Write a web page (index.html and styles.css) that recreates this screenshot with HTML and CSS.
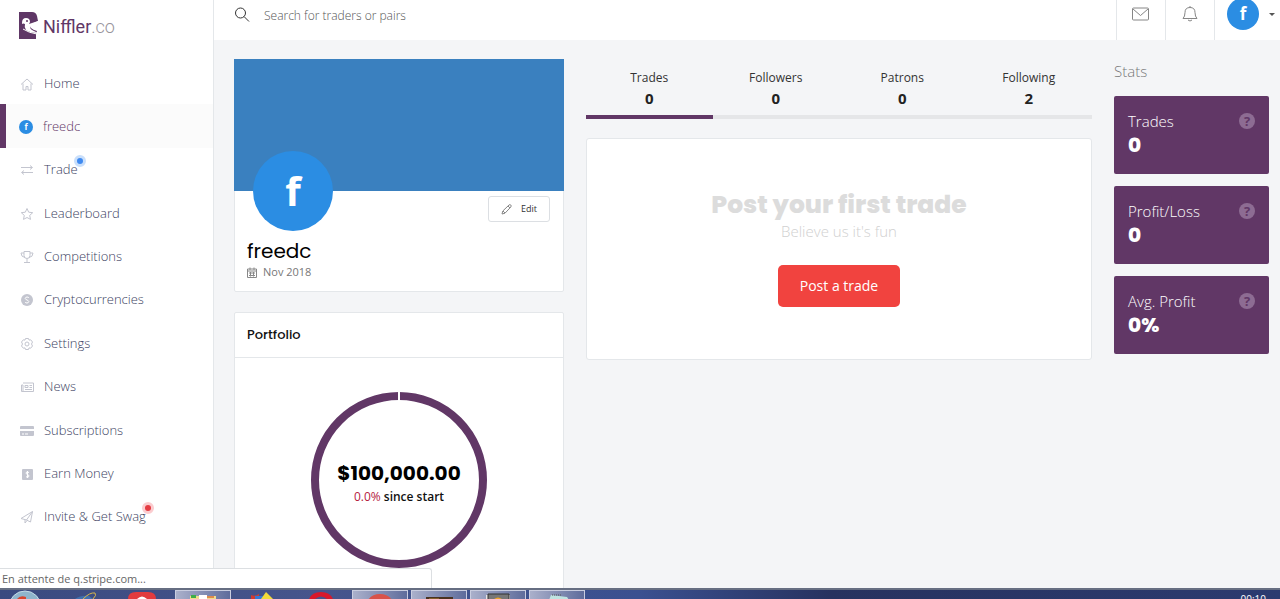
FILE: index.html
```html
<!DOCTYPE html>
<html lang="en">
<head>
<meta charset="UTF-8" /><meta name="viewport" content="width=device-width,initial-scale=1" />
<title>Niffler.co</title>
<link rel="stylesheet" href="styles.css">
</head>
<body>
  <div class="app">
    <aside class="sidebar">
      <a class="logo" href="#" aria-label="Niffler.co">
        <svg width="20" height="27" viewBox="0 0 20 27" aria-hidden="true">
          <path d="M0 0h13q4 0 5 4l1 5-6 3q-3 2-1 4 2 2 6 3l-1 3v5H0z" fill="#5f3766"/>
          <path d="M3 11q0-5 4-5t4 4l-1 2 9-3v2l-7 3q-2 2 1 4l6 3q-8 0-12-3-2-3-1-6-2-1-3 0z" fill="#fff"/>
          <circle cx="8" cy="9" r="1" fill="#5f3766"/>
          <path d="M4 17q6 4 14 5" stroke="#fff" fill="none"/>
        </svg>
        <span>Niffler<span class="logo-tld">.co</span></span>
      </a>
      <nav class="menu" aria-label="Main">
        <a href="#"><svg viewBox="0 0 14 14"><path d="M1 7.500 7 2l6 5.500M3 6.500V13h3V9.500h2V13h3V6.500"/></svg><span>Home</span></a>
        <a href="#" class="active"><span class="avatar avatar-sm">f</span><span>freedc</span></a>
        <a href="#"><svg viewBox="0 0 14 14"><path d="M1 4.500h11M10 2.500l2.500 2L10 6.500M13 9.500H2M4 7.500l-2.500 2 2.500 2"/></svg><span>Trade<i class="dot"></i></span></a>
        <a href="#"><svg viewBox="0 0 14 14"><path d="m7 1.500 1.700 3.700 4 .5-3 2.700.8 4L7 10.500l-3.500 1.900.8-4-3-2.700 4-.5z"/></svg><span>Leaderboard</span></a>
        <a href="#"><svg viewBox="0 0 14 14"><path d="M4 1.500h6v4q0 3-3 3t-3-3zM4 3H1q0 4 4 4.500M10 3h3q0 4-4 4.500M7 8.500V12M4 12.500h6"/></svg><span>Competitions</span></a>
        <a href="#"><svg viewBox="0 0 14 14"><circle class="solid" cx="7" cy="7" r="6"/><path class="cut" d="M9 5q-.5-1-2-1T5.200 5.500Q5.500 6.500 7 7t1.800 1.500Q8.500 10 7 10T5 9"/></svg><span>Cryptocurrencies</span></a>
        <a href="#"><svg viewBox="0 0 14 14"><path d="M5.500 1.500h3l.5 1.600 1.700-.3L12.500 5 11.500 7l1 2-1.800 2.200-1.700-.3-.5 1.600h-3L5 10.900l-1.700.3L1.500 9l1-2-1-2 1.800-2.200 1.700.3z"/><circle cx="7" cy="7" r="2"/></svg><span>Settings</span></a>
        <a href="#"><svg viewBox="0 0 14 14"><path d="M3 3h10.500v8.500h-12V5H3v6"/><path d="M5 5.500h3v2H5zM9.500 5.500H12M9.500 7.500H12M5 9.500h7"/></svg><span>News</span></a>
        <a href="#"><svg viewBox="0 0 14 14"><path class="solid" d="M1 2h12q1 0 1 1v2H0V3q0-1 1-1zM0 7h14v4q0 1-1 1H1q-1 0-1-1z"/><path class="cut" d="M2 10h2M5 10h3"/></svg><span>Subscriptions</span></a>
        <a href="#"><svg viewBox="0 0 14 14"><rect class="solid" x="2" y="2" width="11" height="11" rx="1"/><path class="cut" d="M9 5.500q-3-1.500-3 .5 0 1 1.500 1.500T9 9q0 2-3 .8M7.500 4v7"/></svg><span>Earn Money</span></a>
        <a href="#"><svg viewBox="0 0 14 14"><path d="M1 8.500 12.500 1.500 10.500 12 6.500 10zM6.500 10 12.500 1.500M5 9.500V13l2-2.500"/></svg><span>Invite &amp; Get Swag<i class="dot dot-red"></i></span></a>
      </nav>
    </aside>
    <div class="page">
      <header class="topbar">
        <form class="search" role="search">
          <svg width="16" height="16" viewBox="0 0 16 16" aria-hidden="true"><circle cx="6.500" cy="6" r="5"/><path d="m10 9.500 5 5"/></svg>
          <input type="search" aria-label="Search" placeholder="Search for traders or pairs">
        </form>
        <button class="top-btn" aria-label="Messages"><svg width="18" height="14" viewBox="0 0 18 14"><rect x=".5" y="1" width="16" height="12" rx="1"/><path d="m1 2 7.500 6.500L16 2"/></svg></button>
        <button class="top-btn" aria-label="Notifications"><svg width="16" height="18" viewBox="0 0 16 18"><path d="M1 13.500q2-2 2-6 0-5 5-5t5 5q0 4 2 6zM8 1v1.500M6 15q2 2 4 0"/></svg></button>
        <button class="top-user" aria-label="Account"><span class="avatar avatar-md">f</span><span class="caret"></span></button>
      </header>
      <main class="content">
        <div class="col">
          <section class="card profile">
            <div class="cover"></div>
            <div class="profile-body">
              <div class="avatar avatar-lg">f</div>
              <button class="edit"><svg width="11" height="11" viewBox="0 0 11 11"><path d="M1 10l.8-3L8 1q1-.8 1.800 0t0 2L4 9.200zM7 2l2 2M2 7l2 2"/></svg>Edit</button>
              <h1>freedc</h1>
              <p class="joined"><svg width="10" height="11" viewBox="0 0 10 11"><path d="M.5 2h9v8.500h-9zM.5 4h9M3 .5V3M7 .5V3M2 6h6M2 8.500h6M3.500 5v4.500M6.500 5v4.500"/></svg>Nov 2018</p>
            </div>
          </section>
          <section class="card portfolio">
            <h2>Portfolio</h2>
            <div class="chart">
              <svg width="176" height="176" viewBox="0 0 176 176" aria-hidden="true"><circle cx="88" cy="88" r="84"/><path d="M88 0v9"/></svg>
              <div class="chart-label">
                <strong>$100,000.00</strong>
                <span><em>0.0%</em> since start</span>
              </div>
            </div>
          </section>
        </div>
        <div class="col">
          <nav class="tabs" aria-label="Profile">
            <a href="#" class="active">Trades<b>0</b></a>
            <a href="#">Followers<b>0</b></a>
            <a href="#">Patrons<b>0</b></a>
            <a href="#">Following<b>2</b></a>
          </nav>
          <section class="card empty">
            <h2>Post your first trade</h2>
            <p>Believe us it's fun</p>
            <button class="primary">Post a trade</button>
          </section>
        </div>
        <aside class="stats">
          <h2>Stats</h2>
          <div class="stat"><span>Trades</span><i class="help">?</i><strong>0</strong></div>
          <div class="stat"><span>Profit/Loss</span><i class="help">?</i><strong>0</strong></div>
          <div class="stat"><span>Avg. Profit</span><i class="help">?</i><strong>0%</strong></div>
        </aside>
      </main>
    </div>
    <div class="status">En attente de q.stripe.com...</div>
  </div>
  <footer class="taskbar">
    <div class="start"><svg width="40" height="9" viewBox="0 0 40 9"><ellipse cx="20" cy="17" rx="16" ry="16" fill="#8fb5cc" stroke="#c4dce8"/><path d="M12 9q3-4 9-2v2z" fill="#d8452e"/></svg></div>
    <div class="task"><svg width="40" height="9" viewBox="0 0 40 9"><path d="M10 9q6-4 14-3l4 3z" fill="#3f6fae"/><path d="M18 9q7-7 12-6 2 2-2 6" fill="none" stroke="#d9b84a"/></svg></div>
    <div class="task"><svg width="40" height="9" viewBox="0 0 40 9"><path d="M4 9q0-7 8-7h12q8 0 8 7z" fill="#e23b3e"/><path d="M13 9q5-5 10 0z" fill="#fff"/></svg></div>
    <div class="task open"><svg width="40" height="9" viewBox="0 0 40 9"><path d="M7 5h26v4H7z" fill="#f0dc8c"/><path d="M8 4h5v3H8z" fill="#3fae49"/><path d="M16 4h8v4h-8z" fill="#fff"/><path d="M24 5h7v2h-7z" fill="#de8a4c"/></svg></div>
    <div class="task"><svg width="40" height="9" viewBox="0 0 40 9"><path d="M9 5q4 2 8-1v5H9z" fill="#d33a2f"/><path d="M13 6h9v3h-9z" fill="#3578d4"/><path d="m24 2 7 7H19z" fill="#f3dc3a"/></svg></div>
    <div class="task"><svg width="40" height="9" viewBox="0 0 40 9"><path d="M8 9q3-7 12-7t12 7h-6q-6-5-12 0z" fill="#d8182b"/></svg></div>
    <div class="task open"><svg width="40" height="9" viewBox="0 0 40 9"><path d="M8 9q4-6 12-6t12 6z" fill="#d9534a"/></svg></div>
    <div class="task open"><svg width="40" height="9" viewBox="0 0 40 9"><path d="M7 6h27v3H7z" fill="#4a3220"/><path d="M10 7h10v2H10z" fill="#82602c"/></svg></div>
    <div class="task open"><svg width="40" height="9" viewBox="0 0 40 9"><path d="M8 4h24v5H8z" fill="#e6e6e6"/><path d="M10 3h21v6H10z" fill="#777" stroke="#333"/><path d="M15 9q5-5 10 0z" fill="#f2a52a"/></svg></div>
    <div class="task open"><svg width="40" height="9" viewBox="0 0 40 9"><path d="m14 4 16 2 2 3H12z" fill="#bfe3e0"/><path d="M15 4h10" stroke="#555" stroke-dasharray="1 1"/></svg></div>
    <time class="clock">00:10</time>
  </footer>
</body>
</html>
```

FILE: styles.css
```css
:root {
  --purple:#613766;
  --blue:#2b8de3;
  --line:#e4e7ea;
  --text:#3c3f62;
  --icon:#c3c5cf;
  --ui:'Open Sans','Segoe UI',sans-serif;
  --display:Poppins,Inter,sans-serif;
}
*,*::before,*::after{box-sizing:border-box;}
body {
  margin:0;height:100vh;display:flex;flex-direction:column;overflow:hidden;
  font-family:var(--ui);font-size:13px;line-height:20px;color:#333;background:#f4f5f7;
}
h1,h2,p {margin:0;}
a {color:inherit;text-decoration:none;}
button {font:inherit;color:inherit;background:none;border:0;padding:0;cursor:pointer;}
svg {fill:none;flex:none;display:block;}
.app {
  flex:1;min-height:0;display:flex;position:relative;overflow:hidden;
}

/* sidebar */
.sidebar {
  width:214px;flex:none;background:#fff;border-right:1px solid var(--line);display:flex;flex-direction:column;padding-bottom:50px;
}
.logo {
  height:61px;padding:12px 0 0 19px;display:flex;align-items:flex-start;gap:4px;
  font-family:Roboto,sans-serif;font-size:18px;line-height:29px;color:var(--purple);
}
.logo-tld {font-weight:300;color:#98949c;}
.menu {flex:1;display:flex;flex-direction:column;font-weight:300;}
.menu a {
  flex:1;display:flex;align-items:center;gap:10px;padding-left:20px;color:var(--text);
}
.menu a > span:last-child {position:relative;}
.menu svg {width:14px;height:14px;margin-top:2px;stroke:var(--icon);}
.menu .solid {fill:var(--icon);stroke:none;}
.menu .cut {stroke:#fff;}
.menu a.active {
  background:#fbfbfb;color:var(--purple);border-left:6px solid var(--purple);padding-left:13px;
}
.dot {
  position:absolute;top:-4px;right:-8px;width:12px;height:12px;border-radius:50%;border:3px solid #c9dffb;background:#3f8af0;
}
.dot-red {border-color:#fbcccf;background:#e43b42;}
.avatar {
  display:flex;align-items:center;justify-content:center;border-radius:50%;background:var(--blue);color:#fff;font-weight:700;flex:none;
}
.avatar-sm {width:14px;height:14px;margin-top:2px;font-size:8px;line-height:14px;}
.avatar-md {width:32px;height:32px;font-size:17px;}
.avatar-lg {width:80px;height:80px;font-size:40px;line-height:80px;}

/* top bar */
.page {flex:1;min-width:0;}
.topbar {
  height:40px;display:flex;background:#fff;overflow:hidden;
}
.search {flex:1;display:flex;align-items:center;gap:14px;padding:0 0 10px 20px;}
.search svg {stroke:#333;}
.search input {
  flex:1;border:0;outline:0;background:none;padding:2px 0 0;font:300 12px/20px var(--ui);color:#333;
}
.search input::placeholder {color:#555;opacity:1;}
.top-btn,.top-user {
  width:49px;border-left:1px solid var(--line);padding-bottom:12px;display:flex;align-items:center;justify-content:center;
}
.top-btn svg {stroke:#868686;}
.top-user {width:66px;gap:10px;padding-left:12px;justify-content:flex-start;}
.caret {border:3px solid transparent;border-top-color:#555;border-bottom:0;}

/* page columns */
.content {
  display:grid;grid-template-columns:330fr 506fr 155fr;gap:22px;padding:19px 11px 0 20px;align-items:start;
}
.card {background:#fff;border:1px solid var(--line);border-radius:2px;}
.cover {height:132px;background:#3a80bf;margin:-1px -1px 0;}
.profile {margin-bottom:20px;}
.profile-body {position:relative;padding:48px 12px 10px;}
.profile .avatar-lg {position:absolute;top:-40px;left:18px;}
.edit {
  position:absolute;top:5px;right:13px;width:62px;height:26px;border:1px solid #dcdfe3;border-radius:3px;
  display:flex;align-items:center;justify-content:center;gap:9px;font-size:9px;color:#333;
}
.edit svg,.joined svg {stroke:#888;}
.profile h1 {font:400 20px/24px var(--display);color:#000;}
.joined {
  display:flex;align-items:center;gap:6px;font-size:11px;line-height:18px;font-weight:500;color:#777;
}
.portfolio h2 {
  font:500 13px/44px var(--display);color:#111;padding-left:12px;border-bottom:1px solid var(--line);
}
.chart {position:relative;padding:34px 0 40px;display:flex;justify-content:center;}
.chart circle {stroke:var(--purple);stroke-width:8;}
.chart path {stroke:#fff;stroke-width:2;}
.chart-label {
  position:absolute;inset:0;display:flex;flex-direction:column;align-items:center;justify-content:center;
  font-size:12px;line-height:20px;font-weight:600;color:#111;
}
.chart-label strong {font:700 20px/28px var(--display);color:#000;}
.chart-label em {font-style:normal;font-weight:400;color:#b5213f;}

.tabs {display:grid;grid-template-columns:repeat(4,1fr);margin-bottom:19px;}
.tabs a {
  height:60px;padding-top:9px;text-align:center;font-size:12px;border-bottom:4px solid #e5e6e8;
}
.tabs a.active {border-color:var(--purple);}
.tabs b {display:block;font-size:15px;color:#222;}
.empty {
  padding:50px 20px 52px;display:flex;flex-direction:column;align-items:center;color:#dcdcdc;border-radius:3px;
}
.empty h2 {font:800 25px/32px var(--display);}
.empty p {font-size:15px;line-height:20px;font-weight:300;color:#d0d0d0;}
.primary {
  margin-top:24px;width:122px;height:42px;border-radius:5px;background:#f1433f;color:#fff;font-size:14px;
}

/* stats */
.stats {display:flex;flex-direction:column;gap:12px;}
.stats h2 {font-size:15px;line-height:25px;font-weight:300;color:#777;}
.stat {
  height:78px;padding:13px 14px;border-radius:2px;background:var(--purple);color:#fff;
  display:grid;grid-template-columns:1fr 16px;align-content:start;align-items:center;font-size:15px;line-height:24px;font-weight:300;
}
.stat strong {font:800 20px/24px var(--display);}
.help {
  width:16px;height:16px;border-radius:50%;background:#8d6c93;color:var(--purple);font:normal 700 13px/16px var(--ui);text-align:center;
}

.status {
  position:absolute;left:0;bottom:0;width:432px;height:20px;padding-left:2px;
  background:#fff;border:1px solid #dcdfe2;border-width:1px 1px 0 0;border-radius:0 3px 0 0;font-size:11px;line-height:20px;color:#666;
}
.taskbar {
  height:11px;flex:none;display:flex;gap:3px;overflow:hidden;border-top:2px solid #666e82;
  background:linear-gradient(90deg,#3a4a80,#46558c 25%,#3a5090 50%,#27325f 65%,#2c3b70);
}
.start {width:54px;padding-left:5px;}
.task {width:56px;display:flex;justify-content:center;}
.task.open {background:linear-gradient(90deg,#aab0cb,#5f6c9c);border:1px solid #c9cde0;border-width:1px 1px 0;}
.clock {margin-left:auto;padding:2px 14px 0 0;font:10px/14px var(--ui);color:#fff;}
```
